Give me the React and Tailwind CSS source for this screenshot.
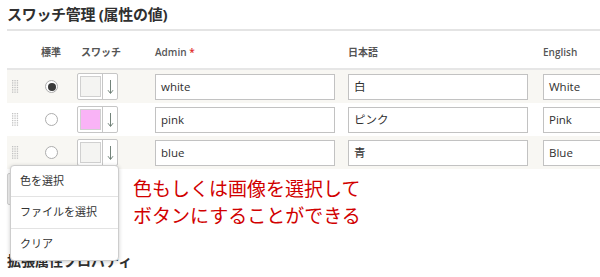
import React from 'react';

const rows = [
  { admin: 'white', ja: '白', en: 'White', color: '#f4f4f2', checked: true },
  { admin: 'pink', ja: 'ピンク', en: 'Pink', color: '#f9b3f6', checked: false },
  { admin: 'blue', ja: '青', en: 'Blue', color: '#f4f4f2', checked: false },
];

const font = { fontFamily: '"Open Sans", "Noto Sans CJK JP", sans-serif' };

const DragHandle = () => (
  <svg width="7" height="13" viewBox="0 0 7 13">
    {[0, 1, 2, 3, 4, 5].map((r) =>
      [0, 1, 2].map((c) => (
        <rect key={`${r}-${c}`} x={c * 2.4} y={r * 2.3} width="1.3" height="1.3" fill="#c2c2c2" />
      ))
    )}
  </svg>
);

const Radio = ({ checked }) => (
  <span className="w-[13px] h-[13px] rounded-full border border-[#adadad] bg-white flex items-center justify-center">
    {checked && <span className="w-[8px] h-[8px] rounded-full bg-[#3a3a3a]" />}
  </span>
);

const SwatchButton = ({ color }) => (
  <div className="flex h-[27px] w-[41px] border border-[#c6c6c6] rounded-[2px] bg-white">
    <div className="p-[2px] pr-[1px]">
      <div className="w-[21px] h-[21px] border border-[#d0d0d0]" style={{ background: color }} />
    </div>
    <div className="flex-1 border-l border-[#c6c6c6] flex items-center justify-center">
      <svg width="7" height="16" viewBox="0 0 7 16">
        <path d="M3.5 1 V14 M1 11.2 L3.5 14.5 L6 11.2" stroke="#62756b" strokeWidth="0.9" fill="none" />
      </svg>
    </div>
  </div>
);

const Field = ({ value }) => (
  <div className="h-[26px] w-[180px] border border-[#c2c2c2] bg-white flex items-center pl-[5px] text-[11.5px] text-[#303030]">
    {value}
  </div>
);

export default function App() {
  return (
    <div className="relative w-[600px] h-[277px] overflow-hidden bg-white" style={font}>
      <div className="pl-[7px] pt-[4px]">
        <h2 className="text-[15px] font-bold text-[#303030] leading-[20px] tracking-[-0.3px]">スワッチ管理 (属性の値)</h2>
        <div className="mt-[5px] h-[2px] bg-[#e4e4e4]" />

        <div className="grid grid-cols-[28px_32px_88px_193px_195px_1fr] items-end h-[39px] pb-[8px] border-b-2 border-[#e6e6e6] text-[10px] text-[#555] font-semibold">
          <span />
          <span className="text-center">標準</span>
          <span className="pl-[14px]">スワッチ</span>
          <span>Admin <span className="text-[#e02b27]">*</span></span>
          <span>日本語</span>
          <span>English</span>
        </div>

        {rows.map((row, i) => (
          <div
            key={row.admin}
            className={`grid grid-cols-[28px_32px_88px_193px_195px_1fr] items-center h-[33px] ${i % 2 === 0 ? 'bg-[#f8f7f3]' : 'bg-white'}`}
          >
            <span className="pl-[5px] flex"><DragHandle /></span>
            <span className="flex justify-center pl-[1px]"><Radio checked={row.checked} /></span>
            <span className="pl-[10px]"><SwatchButton color={row.color} /></span>
            <Field value={row.admin} />
            <Field value={row.ja} />
            <Field value={row.en} />
          </div>
        ))}

        <div className="mt-[4px] h-[32px] w-[90px] bg-[#eeeeee] border border-[#cfcfcf] rounded-[2px]" />

        <h3 className="mt-[47px] text-[14px] font-bold text-[#303030] leading-[18px]">拡張属性プロパティ</h3>
      </div>

      <div className="absolute left-[10px] top-[165px] w-[109px] bg-white border border-[#cdcdcd] rounded-[4px] shadow-[0_1px_4px_rgba(0,0,0,0.2)] text-[11px] text-[#333]">
        <div className="h-[31px] flex items-center pl-[9px] border-b border-[#e3e3e3]">色を選択</div>
        <div className="h-[32px] flex items-center pl-[9px] border-b border-[#e3e3e3]">ファイルを選択</div>
        <div className="h-[31px] flex items-center pl-[9px]">クリア</div>
      </div>

      <div className="absolute left-[133px] top-[174px] text-[19px] leading-[27px] text-[#d10000]" style={{ fontFamily: '"Noto Sans CJK JP", sans-serif' }}>
        <p>色もしくは画像を選択して</p>
        <p>ボタンにすることができる</p>
      </div>
    </div>
  );
}
